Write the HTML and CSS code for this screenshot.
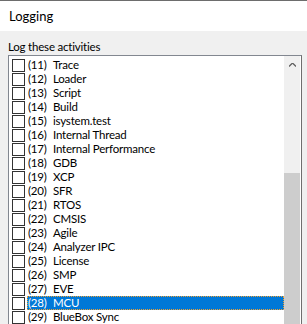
FILE: index.html
```html
<!DOCTYPE html>
<html lang="en">

<head>
  <meta charset="UTF-8" />
  <title>Logging</title>
  <link rel="stylesheet" href="styles.css">
</head>

<body>
  <!-- Page title -->
  <div class="header">Logging</div>

  <div class="panel">
    <div class="label">Log these activities</div>

    <!-- Checked list box -->
    <div class="listbox">
      <ul class="items">
        <li class="item"><span class="check"></span><span class="text"><span class="num">(11)</span>Trace</span></li>
        <li class="item"><span class="check"></span><span class="text"><span class="num">(12)</span>Loader</span></li>
        <li class="item"><span class="check"></span><span class="text"><span class="num">(13)</span>Script</span></li>
        <li class="item"><span class="check"></span><span class="text"><span class="num">(14)</span>Build</span></li>
        <li class="item"><span class="check"></span><span class="text"><span class="num">(15)</span>isystem.test</span></li>
        <li class="item"><span class="check"></span><span class="text"><span class="num">(16)</span>Internal Thread</span></li>
        <li class="item"><span class="check"></span><span class="text"><span class="num">(17)</span>Internal Performance</span></li>
        <li class="item"><span class="check"></span><span class="text"><span class="num">(18)</span>GDB</span></li>
        <li class="item"><span class="check"></span><span class="text"><span class="num">(19)</span>XCP</span></li>
        <li class="item"><span class="check"></span><span class="text"><span class="num">(20)</span>SFR</span></li>
        <li class="item"><span class="check"></span><span class="text"><span class="num">(21)</span>RTOS</span></li>
        <li class="item"><span class="check"></span><span class="text"><span class="num">(22)</span>CMSIS</span></li>
        <li class="item"><span class="check"></span><span class="text"><span class="num">(23)</span>Agile</span></li>
        <li class="item"><span class="check"></span><span class="text"><span class="num">(24)</span>Analyzer IPC</span></li>
        <li class="item"><span class="check"></span><span class="text"><span class="num">(25)</span>License</span></li>
        <li class="item"><span class="check"></span><span class="text"><span class="num">(26)</span>SMP</span></li>
        <li class="item"><span class="check"></span><span class="text"><span class="num">(27)</span>EVE</span></li>
        <li class="item selected"><span class="check"></span><span class="text"><span class="num">(28)</span>MCU</span></li>
        <li class="item"><span class="check"></span><span class="text"><span class="num">(29)</span>BlueBox Sync</span></li>
      </ul>

      <div class="scrollbar">
        <div class="arrow">
          <svg width="7" height="4" viewBox="0 0 7 4">
            <path d="M0 3.5 L3.5 0 L7 3.5" fill="none" stroke="#606060" stroke-width="1.3" />
          </svg>
        </div>
        <div class="track"></div>
        <div class="thumb"></div>
      </div>
    </div>
  </div>
</body>

</html>
```

FILE: styles.css
```css
body {
  margin: 0;
  font-family: Lato, 'Noto Sans', sans-serif;
  font-size: 11.5px;
  letter-spacing: -0.2px;
  color: #000;
  background: #f0f0f0;
  height: 324px;
  overflow: hidden;
}

/* Title bar */
.header {
  height: 30px;
  line-height: 30px;
  padding-left: 9px;
  background: #fff;
  border-top: 1px solid #6d6d6d;
  font-size: 13px;
  letter-spacing: 0;
}

.panel {
  padding: 7px 0 0 8px;
}

.label {
  height: 17px;
  line-height: 17px;
}

/* List box */
.listbox {
  display: flex;
  width: 292px;
  height: 270px;
  background: #fff;
  border: 1px solid #828790;
  border-right-color: #6f6f6f;
  border-bottom: none;
}

.items {
  list-style: none;
  margin: 0;
  padding: 2px 0 0 3px;
  width: 272px;
}

.item {
  display: flex;
  align-items: center;
  height: 14px;
}

.check {
  width: 11px;
  height: 11px;
  border: 1px solid #333;
  background: #fff;
  margin-right: 2px;
}

.text {
  flex: 1;
  height: 14px;
  line-height: 14px;
  padding-left: 1px;
  box-sizing: border-box;
  white-space: nowrap;
}

.num {
  display: inline-block;
  width: 25px;
}

.selected .text {
  background: #0078d7;
  color: #fff;
  outline: 1px dotted #f0a030;
  outline-offset: -1px;
}

.scrollbar {
  display: flex;
  flex-direction: column;
  width: 16px;
  margin-right: 1px;
  background: #f0f0f0;
}

.arrow {
  height: 17px;
  display: flex;
  align-items: center;
  justify-content: center;
}

.track {
  height: 100px;
}

.thumb {
  flex: 1;
  background: #cdcdcd;
}
```
